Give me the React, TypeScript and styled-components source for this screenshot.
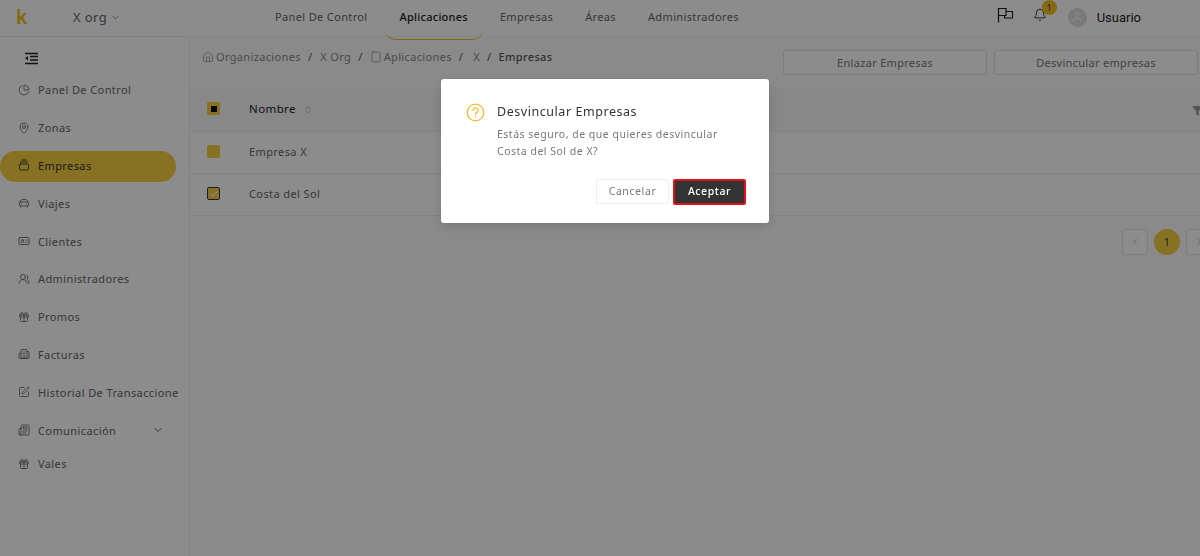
import React from "react";
import styled, { createGlobalStyle } from "styled-components";
import { ChevronDown, ChevronLeft, ChevronRight, House, Tablet, MapPin, ChartPie, CarFront, IdCard, UsersRound, Gift, Building2, SquarePen, Check, Bell, User, ChevronsUpDown, Filter, GalleryVerticalEnd, Newspaper } from "lucide-react";

const Global = createGlobalStyle`
  html, body { margin: 0; padding: 0; width: 1200px; height: 556px; overflow: hidden; background: #fff; }
  body { font-family: "Noto Sans", "Open Sans", sans-serif; letter-spacing: .4px; }
  * { box-sizing: border-box; }
`;
const Page = styled.div`width: 1200px; height: 556px; display: flex; flex-direction: column; overflow: hidden; background: #fbfbfb;`;
const Header = styled.header`height: 37px; flex: none; display: flex; align-items: center; border-bottom: 1px solid #eee; background: #fff; position: relative;`;
const Logo = styled.div`width: 73px; padding-left: 16px; font: 700 20px "Liberation Sans", sans-serif; color: #f0c020; margin-top: -2px;`;
const Org = styled.div`width: 186px; display: flex; align-items: center; gap: 3px; font-size: 13px; color: #666; letter-spacing: .4px; margin-top: -3px; svg { margin-top: 2px; }`;
const TopNav = styled.nav`display: flex; margin-top: -3px;`;
const TopItem = styled.div<{ $active?: boolean }>`
  padding: 0 16px; font-size: 11px; line-height: 30px; color: ${p => p.$active ? "#222" : "#666"}; font-weight: ${p => p.$active ? 500 : 400}; position: relative; letter-spacing: ${p => p.$active ? ".25px" : ".36px"};
  ${p => p.$active && `&::after { content: ""; position: absolute; left: 1px; right: 1px; top: 28px; height: 9px; border-bottom: 1.5px solid #f0c020; border-radius: 0 0 12px 12px; }`}
`;
const Right = styled.div`margin-left: auto; display: flex; align-items: center; margin-top: -2px;`;
const IconSlot = styled.div`position: relative; width: 34px; color: #222; display: flex; justify-content: center; margin-top: -4px;`;
const Badge = styled.span`position: absolute; left: 19px; top: -8px; width: 15px; height: 15px; border-radius: 50%; background: #f0c020; color: #333; font-size: 8px; text-align: center; line-height: 15px;`;
const Avatar = styled.div`width: 19px; height: 19px; border-radius: 50%; background: #ddd; color: #fff; display: flex; align-items: center; justify-content: center; margin-left: 11px;`;
const UserName = styled.div`font: 400 13px Roboto, sans-serif; color: #222; margin: 0 59px 0 10px; letter-spacing: 0;`;
const Body = styled.div`flex: 1; display: flex; min-height: 0;`;
const Side = styled.aside`width: 190px; flex: none; background: #fff; border-right: 1px solid #eee; padding-top: 12px;`;
const Collapse = styled.div`padding-left: 24px; height: 20px; color: #222; margin-bottom: 2px;`;
const SideItem = styled.div<{ $active?: boolean; $h?: number }>`
  display: flex; align-items: center; height: ${p => p.$h ?? 37.8}px; font-size: 11px; color: ${p => p.$active ? "#333" : "#666"}; position: relative; padding-left: 18px; gap: 8px; white-space: nowrap; overflow: hidden; width: 178px; z-index: 0;
  svg { flex: none; }
  ${p => p.$active && `&::before { content: ""; position: absolute; z-index: -1; left: 0; top: 4.5px; width: 176px; height: 31px; border-radius: 16px; background: #f5cf3f; }`}
`;
const Chev = styled.span`margin-left: auto; padding-right: 14px; display: flex; color: #555;`;
const Main = styled.main`flex: 1; min-width: 0;`;
const Crumbs = styled.div`height: 51px; display: flex; padding: 12px 2px 0 12px; font-size: 11px; color: #888; align-items: flex-start; letter-spacing: .35px;`;
const Crumb = styled.span<{ $strong?: boolean; $indent?: number }>`display: inline-flex; align-items: center; gap: 2px; line-height: 16px; padding-left: ${p => p.$indent ?? 0}px; color: ${p => p.$strong ? "#555" : "#888"}; font-weight: ${p => p.$strong ? 500 : 400};`;
const Sep = styled.span`margin: 0 7px; color: #555; line-height: 16px;`;
const Actions = styled.div`margin-left: auto; display: flex; gap: 7px; margin-top: 1px;`;
const OutlineBtn = styled.div`width: 204px; height: 25px; border: 1px solid #e2e2e2; border-radius: 2px; background: #fff; display: flex; align-items: center; justify-content: center; font-size: 11px; color: #777; letter-spacing: .3px;`;
const Row = styled.div<{ $head?: boolean; $h: number }>`height: ${p => p.$h}px; display: flex; align-items: center; background: ${p => p.$head ? "#f8f8f8" : "#fff"}; border-bottom: 1px solid #efefef; padding: 0 0 2px 17px; font-size: ${p => p.$head ? 11.5 : 11}px; color: ${p => p.$head ? "#222" : "#666"}; position: relative;`;
const Label = styled.span`margin-top: -1px;`;
const Box = styled.span<{ $kind: "some" | "full" | "on" }>`
  width: 13px; height: 13px; border-radius: 2px; background: #f5cf3f; display: flex; align-items: center; justify-content: center; color: #fff; margin-right: 29px; flex: none;
  ${p => p.$kind === "on" && "border: 1px solid #333;"}
  ${p => p.$kind === "some" && `&::after { content: ""; width: 6px; height: 6px; background: #111; }`}
`;
const Sort = styled.span`display: flex; margin-left: 7px; color: #aaa; margin-top: 2px;`;
const Funnel = styled.span`position: absolute; right: -3px; top: 17px; display: flex; color: #999;`;
const Pager = styled.div`display: flex; gap: 6px; margin: 13px 0 0 932px; align-items: center;`;
const PageBtn = styled.div`width: 26px; height: 26px; flex: none; border: 1px solid #e4e4e4; border-radius: 3px; background: #fff; display: flex; align-items: center; justify-content: center; color: #bbb;`;
const PageNum = styled.div`width: 26px; height: 26px; flex: none; border-radius: 50%; background: #f5cf3f; display: flex; align-items: center; justify-content: center; font-size: 10px; color: #333;`;
const Overlay = styled.div`position: fixed; inset: 0; background: rgba(0,0,0,.45); display: flex; justify-content: center; align-items: flex-start; padding: 79px 0 0 10px;`;
const Modal = styled.div`width: 328px; height: 144px; background: #fff; border-radius: 3px; padding: 24px 23px 0 25px; box-shadow: 0 3px 12px rgba(0,0,0,.15);`;
const ModalTop = styled.div`display: flex; gap: 12px;`;
const ModalIcon = styled.div`color: #f0b92c; width: 19px; flex: none;`;
const ModalTitle = styled.div`font-size: 12.5px; line-height: 18px; color: #333; letter-spacing: .55px;`;
const ModalText = styled.div`font-size: 10.5px; line-height: 17px; color: #777; margin-top: 5px; letter-spacing: .5px;`;
const ModalBtns = styled.div`display: flex; justify-content: flex-end; gap: 4px; margin-top: 19px;`;
const Cancel = styled.div`width: 73px; height: 25px; padding-bottom: 2px; border: 1px solid #eee; border-radius: 2px; display: flex; align-items: center; justify-content: center; font-size: 10.5px; color: #777; letter-spacing: .6px;`;
const Accept = styled.div`width: 73px; height: 26px; padding-bottom: 2px; background: #333; border: 2px solid #e0101c; border-radius: 2px; display: flex; align-items: center; justify-content: center; font-size: 10.5px; font-weight: 500; color: #fff; letter-spacing: .6px;`;

const ic = { size: 12, strokeWidth: 1.7 };
const items = [
  { t: "Panel De Control", i: <ChartPie {...ic} /> },
  { t: "Zonas", i: <MapPin {...ic} /> },
  { t: "Empresas", i: <GalleryVerticalEnd {...ic} />, active: true },
  { t: "Viajes", i: <CarFront {...ic} /> },
  { t: "Clientes", i: <IdCard {...ic} /> },
  { t: "Administradores", i: <UsersRound {...ic} /> },
  { t: "Promos", i: <Gift {...ic} /> },
  { t: "Facturas", i: <Building2 {...ic} /> },
  { t: "Historial De Transacciones", i: <SquarePen {...ic} /> },
  { t: "Comunicación", i: <Newspaper {...ic} />, more: true },
  { t: "Vales", i: <Gift {...ic} />, h: 30 },
];

const CollapseIcon = () => (
  <svg width="15" height="15" viewBox="0 0 15 15" fill="none" stroke="currentColor" strokeWidth="1.3">
    <path d="M1 2.5h13M6 5.5h8M6 9h8M1 12.5h13" />
    <path d="M4 5L1.2 7.2 4 9.5z" fill="currentColor" stroke="none" />
  </svg>
);
const FlagIcon = () => (
  <svg width="17" height="16" viewBox="0 0 17 16" fill="none" stroke="currentColor" strokeWidth="1.2">
    <path d="M1.5 1v14.5" />
    <path d="M1.5 1.5h7.5v7h-7.5" />
    <path d="M9 4.5h6.5v6.5h-8V8.5" />
  </svg>
);

export default function App() {
  return (
    <Page>
      <Global />
      <Header>
        <Logo>k</Logo>
        <Org>X org <ChevronDown size={11} strokeWidth={1.5} /></Org>
        <TopNav>
          <TopItem>Panel De Control</TopItem>
          <TopItem $active>Aplicaciones</TopItem>
          <TopItem>Empresas</TopItem>
          <TopItem>Áreas</TopItem>
          <TopItem>Administradores</TopItem>
        </TopNav>
        <Right>
          <IconSlot><FlagIcon /></IconSlot>
          <IconSlot><Bell size={14} strokeWidth={1.5} /><Badge>1</Badge></IconSlot>
          <Avatar><User size={12} strokeWidth={2} /></Avatar>
          <UserName>Usuario</UserName>
        </Right>
      </Header>
      <Body>
        <Side>
          <Collapse><CollapseIcon /></Collapse>
          {items.map(it => (
            <SideItem key={it.t} $active={it.active} $h={it.h}>
              {it.i}{it.t}
              {it.more && <Chev><ChevronDown size={12} strokeWidth={2} /></Chev>}
            </SideItem>
          ))}
        </Side>
        <Main>
          <Crumbs>
            <Crumb><House size={12} strokeWidth={1.4} />Organizaciones</Crumb><Sep>/</Sep>
            <Crumb $indent={1}>X Org</Crumb><Sep>/</Sep>
            <Crumb><Tablet size={12} strokeWidth={1.4} />Aplicaciones</Crumb><Sep>/</Sep>
            <Crumb $indent={3}>X</Crumb><Sep>/</Sep>
            <Crumb $strong>Empresas</Crumb>
            <Actions>
              <OutlineBtn>Enlazar Empresas</OutlineBtn>
              <OutlineBtn>Desvincular empresas</OutlineBtn>
            </Actions>
          </Crumbs>
          <Row $head $h={44}>
            <Box $kind="some" /><Label>Nombre</Label>
            <Sort><ChevronsUpDown size={10} /></Sort>
            <Funnel><Filter size={11} fill="currentColor" /></Funnel>
          </Row>
          <Row $h={42}><Box $kind="full" /><Label>Empresa X</Label></Row>
          <Row $h={42}><Box $kind="on"><Check size={10} strokeWidth={2.5} /></Box><Label>Costa del Sol</Label></Row>
          <Pager>
            <PageBtn><ChevronLeft size={12} /></PageBtn>
            <PageNum>1</PageNum>
            <PageBtn><ChevronRight size={12} /></PageBtn>
          </Pager>
        </Main>
      </Body>
      <Overlay>
        <Modal>
          <ModalTop>
            <ModalIcon>
              <svg width="19" height="19" viewBox="0 0 24 24" fill="none" stroke="currentColor" strokeWidth="1.6" strokeLinecap="round">
                <circle cx="12" cy="12" r="10.5" />
                <path d="M8.8 9.4a3.2 3.2 0 1 1 4.8 2.8c-1 .6-1.6 1.2-1.6 2.4" />
                <path d="M12 17.6v.2" />
              </svg>
            </ModalIcon>
            <div>
              <ModalTitle>Desvincular Empresas</ModalTitle>
              <ModalText>Estás seguro, de que quieres desvincular<br />Costa del Sol de X?</ModalText>
            </div>
          </ModalTop>
          <ModalBtns>
            <Cancel>Cancelar</Cancel>
            <Accept>Aceptar</Accept>
          </ModalBtns>
        </Modal>
      </Overlay>
    </Page>
  );
}
